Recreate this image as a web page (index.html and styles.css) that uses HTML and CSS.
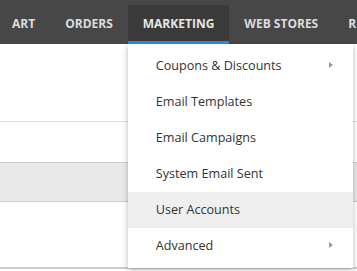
FILE: index.html
```html
<!DOCTYPE html>
<html>
<head>
<meta charset="utf-8">
<link rel="stylesheet" href="styles.css">
</head>
<body>
<nav class="topnav">
  <ul class="nav-list">
    <li class="nav-item">ART</li>
    <li class="nav-item">ORDERS</li>
    <li class="nav-item active">MARKETING
      <ul class="dropdown">
        <li class="dd-item has-sub">Coupons &amp; Discounts<span class="caret"></span></li>
        <li class="dd-item">Email Templates</li>
        <li class="dd-item">Email Campaigns</li>
        <li class="dd-item">System Email Sent</li>
        <li class="dd-item hover">User Accounts</li>
        <li class="dd-item has-sub">Advanced<span class="caret"></span></li>
      </ul>
    </li>
    <li class="nav-item">WEB STORES</li>
    <li class="nav-item">REPORTS</li>
  </ul>
</nav>
<main class="page">
  <div class="row row-a"></div>
  <div class="row row-b"></div>
  <div class="row row-c"></div>
  <div class="row row-d"></div>
</main>
</body>
</html>
```
FILE: styles.css
```css
html, body {
  margin: 0;
  padding: 0;
  background: #fff;
  overflow: hidden;
}
body {
  font-family: "Open Sans", "Liberation Sans", sans-serif;
  width: 357px;
  height: 271px;
}
.topnav {
  background: #474747;
  height: 44px;
  overflow: visible;
}
.nav-list {
  list-style: none;
  margin: 0 0 0 -3px;
  padding: 5px 0 0 0;
  display: flex;
  white-space: nowrap;
}
.nav-item {
  position: relative;
  height: 36px;
  line-height: 37px;
  padding: 0 15px;
  border-bottom: 3px solid transparent;
  color: #dcdcdc;
  font-size: 12px;
  font-weight: 700;
  flex: none;
}
.nav-item.active {
  background: #3a3a3a;
  border-bottom-color: #2b8fe0;
  color: #e6e6e6;
}
.dropdown {
  position: absolute;
  left: 0;
  top: 39px;
  width: 225px;
  margin: 0;
  padding: 4px 0;
  list-style: none;
  background: #fff;
  box-shadow: 0 2px 6px rgba(0, 0, 0, 0.28);
  z-index: 5;
}
.dd-item {
  position: relative;
  height: 36px;
  line-height: 35px;
  padding-left: 28px;
  font-size: 12.6px;
  font-weight: 400;
  color: #333;
}
.dd-item.hover {
  background: #efefef;
}
.caret {
  position: absolute;
  right: 20px;
  top: 14px;
  width: 0;
  height: 0;
  border-top: 3.5px solid transparent;
  border-bottom: 3.5px solid transparent;
  border-left: 4px solid #9a9a9a;
}
.page {
  display: flex;
  flex-direction: column;
}
.row-a {
  height: 77px;
  border-bottom: 1px solid #dedede;
}
.row-b {
  height: 40px;
}
.row-c {
  height: 38px;
  background: #e9e9e9;
  border-top: 1px solid #cdcdcd;
  border-bottom: 1px solid #cdcdcd;
}
.row-d {
  height: 65px;
  border-bottom: 2px solid #cfcfcf;
}
```
